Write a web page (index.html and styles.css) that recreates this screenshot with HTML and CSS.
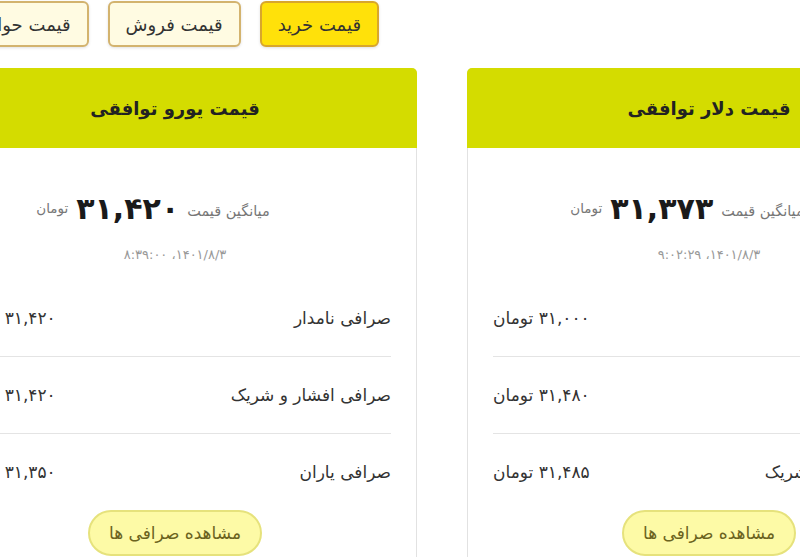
FILE: index.html
```html
<!DOCTYPE html>
<html lang="fa">
<head>
    <meta charset="UTF-8">
    <meta name="viewport" content="width=device-width, initial-scale=1.0">
    <title>قیمت ارز توافقی</title>
    <link rel="stylesheet" href="styles.css">
</head>
<body>
    <div class="page">
        <div class="tabs">
            <button class="tab active">قیمت خرید</button>
            <button class="tab">قیمت فروش</button>
            <button class="tab">قیمت حواله</button>
        </div>

        <div class="cards">
            <div class="card">
                <div class="card-header">قیمت دلار توافقی</div>
                <div class="summary">
                    <div class="avg">
                        <span class="avg-label">میانگین قیمت</span>
                        <span class="avg-price">۳۱,۳۷۳</span>
                        <span class="avg-unit">تومان</span>
                    </div>
                    <div class="date">۱۴۰۱/۸/۳، ۹:۰۲:۲۹</div>
                </div>
                <div class="row">
                    <span class="name">صرافی نامدار</span>
                    <span class="value">۳۱,۰۰۰ تومان</span>
                </div>
                <div class="row">
                    <span class="name">صرافی یاران</span>
                    <span class="value">۳۱,۴۸۰ تومان</span>
                </div>
                <div class="row">
                    <span class="name">صرافی افشار و شریک</span>
                    <span class="value">۳۱,۴۸۵ تومان</span>
                </div>
                <div class="card-footer">
                    <a class="more-btn" href="#">مشاهده صرافی ها</a>
                </div>
            </div>

            <div class="card">
                <div class="card-header">قیمت یورو توافقی</div>
                <div class="summary">
                    <div class="avg">
                        <span class="avg-label">میانگین قیمت</span>
                        <span class="avg-price">۳۱,۴۲۰</span>
                        <span class="avg-unit">تومان</span>
                    </div>
                    <div class="date">۱۴۰۱/۸/۳، ۸:۳۹:۰۰</div>
                </div>
                <div class="row">
                    <span class="name">صرافی نامدار</span>
                    <span class="value">۳۱,۴۲۰ تومان</span>
                </div>
                <div class="row">
                    <span class="name">صرافی افشار و شریک</span>
                    <span class="value">۳۱,۴۲۰ تومان</span>
                </div>
                <div class="row">
                    <span class="name">صرافی یاران</span>
                    <span class="value">۳۱,۳۵۰ تومان</span>
                </div>
                <div class="card-footer">
                    <a class="more-btn" href="#">مشاهده صرافی ها</a>
                </div>
            </div>
        </div>
    </div>
</body>
</html>
```

FILE: styles.css
```css
body {
    font-family: "DejaVu Sans", "Noto Sans", sans-serif;
    background-color: #fff;
    color: #333;
    margin: 0;
    padding: 0;
    overflow: hidden;
}
.page {
    width: 1018px;
    margin-left: -67px;
    direction: rtl;
}
.tabs {
    display: flex;
    gap: 19px;
    padding: 1px 572px 0 0;
    height: 46px;
}
.tab {
    font-family: inherit;
    font-size: 18px;
    color: #333;
    background-color: #fffbe2;
    border: 2px solid #d3b36e;
    border-radius: 6px;
    padding: 0 16px;
    height: 46px;
    box-shadow: 0 1px 3px rgba(0, 0, 0, 0.12);
    white-space: nowrap;
    cursor: pointer;
}
.tab.active {
    background-color: #ffe10a;
    border-color: #d8a62c;
}
.cards {
    display: flex;
    gap: 50px;
    margin-top: 21px;
}
.card {
    width: 484px;
    box-sizing: border-box;
    border: 1px solid #e2e2e2;
    border-radius: 5px 5px 0 0;
    background-color: #fff;
    padding-bottom: 30px;
}
.card-header {
    background-color: #d4dc00;
    height: 80px;
    margin: -1px -1px 0;
    border-radius: 5px 5px 0 0;
    display: flex;
    align-items: center;
    justify-content: center;
    font-size: 18px;
    font-weight: bold;
    color: #222;
}
.summary {
    padding: 36px 0 17px;
    text-align: center;
}
.avg {
    display: flex;
    align-items: center;
    justify-content: center;
    gap: 8px;
    height: 48px;
    padding-right: 44px;
}
.avg-label {
    font-size: 14.5px;
    color: #777;
    margin-top: 6px;
}
.avg-price {
    font-size: 30px;
    font-weight: bold;
    color: #1a1a1a;
}
.avg-unit {
    font-size: 13.5px;
    color: #777;
}
.date {
    font-size: 13px;
    line-height: 16px;
    color: #999;
    margin-top: 15px;
}
.row {
    display: flex;
    justify-content: space-between;
    align-items: center;
    margin: 0 25px;
    padding: 27px 0;
    line-height: 22px;
    font-size: 17px;
    color: #333;
}
.row + .row {
    border-top: 1px solid #e4e4e4;
}
.row:last-of-type {
    padding-bottom: 10px;
}
.card-footer {
    display: flex;
    justify-content: center;
}
.more-btn {
    display: inline-flex;
    align-items: center;
    justify-content: center;
    width: 174px;
    height: 46px;
    box-sizing: border-box;
    border: 2px solid #e6e27c;
    border-radius: 23px;
    background-color: #fdfaa6;
    color: #6b6320;
    font-size: 17px;
    white-space: nowrap;
    text-decoration: none;
}
```
